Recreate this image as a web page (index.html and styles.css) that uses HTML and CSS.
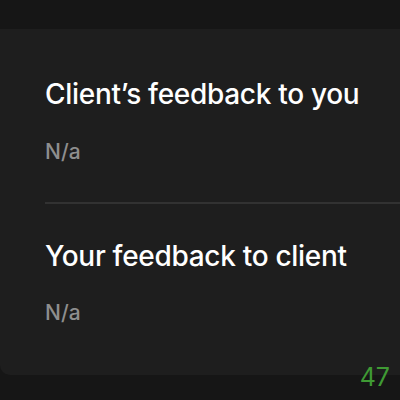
FILE: index.html
```html
<!DOCTYPE html>
<html>
<head>
<meta charset="utf-8">
<link rel="stylesheet" href="styles.css">
</head>
<body>
<div class="page">
  <div class="card">
    <section class="block">
      <h2 class="title">Client’s feedback to you</h2>
      <p class="value">N/a</p>
    </section>
    <div class="divider"></div>
    <section class="block second">
      <h2 class="title">Your feedback to client</h2>
      <p class="value">N/a</p>
    </section>
  </div>
  <div class="count">47</div>
</div>
</body>
</html>
```
FILE: styles.css
```css
html, body {
  margin: 0;
  padding: 0;
  background: #161616;
  width: 400px;
  height: 400px;
  overflow: hidden;
}
.page {
  position: relative;
  width: 400px;
  height: 400px;
  padding-top: 29px;
  box-sizing: border-box;
  font-family: Inter, "Liberation Sans", Arial, sans-serif;
}
.card {
  background: #1e1e1e;
  height: 346px;
  border-radius: 0 0 0 10px;
  padding-left: 45px;
  box-sizing: border-box;
  display: flex;
  flex-direction: column;
}
.block {
  display: flex;
  flex-direction: column;
}
.title {
  margin: 0;
  margin-top: 48px;
  color: #ffffff;
  font-size: 28px;
  font-weight: 500;
  line-height: 34px;
  letter-spacing: -0.3px;
  white-space: nowrap;
}
.second .title {
  margin-top: 35px;
}
.value {
  margin: 0;
  margin-top: 28px;
  color: #8e8e8e;
  font-size: 21px;
  font-weight: 500;
  line-height: 26px;
}
.second .value {
  margin-top: 27px;
}
.divider {
  height: 2px;
  background: #323232;
  margin-top: 37px;
}
.count {
  position: absolute;
  right: 10px;
  top: 362px;
  color: #3f9a34;
  font-size: 25px;
  line-height: 30px;
}
```
